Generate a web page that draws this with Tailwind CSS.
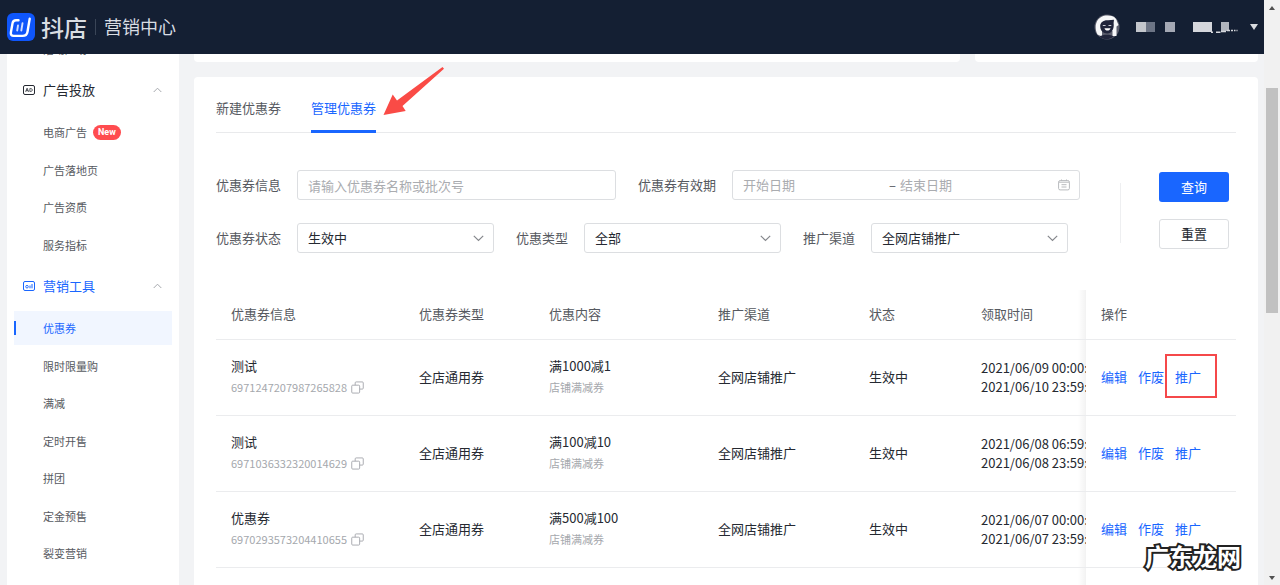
<!DOCTYPE html>
<html lang="zh-CN">
<head>
<meta charset="utf-8">
<title>抖店 营销中心</title>
<script src="https://cdn.jsdelivr.net/npm/@tailwindcss/browser@4"></script>
</head>
<body class="relative flex h-screen overflow-hidden bg-[#f2f3f5] font-['Noto_Sans_CJK_SC',sans-serif] text-[13px] leading-5 text-[#252931]">

<div class="flex min-w-0 flex-1 flex-col">
  <header class="flex h-[54px] shrink-0 items-center bg-[#141f33] pl-[7px] pr-[6px] text-[#d9dde3]">
    <svg class="h-7 w-7" viewBox="0 0 28 28" fill="none" stroke="#fff" stroke-linecap="round" stroke-linejoin="round" aria-hidden="true">
      <rect width="28" height="28" rx="6" fill="#0f56fb" stroke="none"/>
      <path d="M11.500 7.200H9C7 7.200 6 8 5.600 9.900L3.900 19.300C3.500 21.600 4.500 22.900 6.700 22.900H15.500C18.500 22.900 20 21.600 20.500 18.700L22.700 5.800" stroke-width="2.400"/>
      <path d="M11 12.500L10.200 17.500M15.500 10.300L14.300 17.500" stroke-width="1.900" stroke="#cfdcff"/>
    </svg>
    <span class="ml-[6px] text-[23px] font-medium leading-8">抖店</span>
    <span class="ml-[8px] h-4 w-px bg-[#3a4557]"></span>
    <span class="ml-[8px] pb-[2px] text-[18px] leading-8">营销中心</span>
    <div class="ml-auto flex items-center">
      <svg class="h-[26px] w-[26px]" viewBox="0 0 26 26" aria-hidden="true">
        <circle cx="13" cy="13" r="12.500" fill="#5d5f6e"/>
        <path d="M3.500 20.500C-.5 13 2 3 11.500 1.600C19 .8 22.500 4 23 7.500L24.500 11L22.500 12.500V22H18.500V17H8V22.500Z" fill="#f6f7f8"/>
        <path d="M6.200 12.500C6 8.500 9.500 6 14 6.300L20 5.800L19.600 9C20.500 15 17.500 19.500 13.300 19.500C9 19.500 6.400 16.500 6.200 12.500Z" fill="#20243a"/>
        <path d="M5.500 22.500C9 20 17 20 19.500 22.500C15.500 26 9.500 26 5.500 22.500Z" fill="#20243a"/>
        <path d="M8.800 11.500h2.800M14.500 11.500h2.800" stroke="#c9cbd3"/>
        <path d="M10.500 14.200h6C15.800 17.300 11 17.300 10.500 14.200Z" fill="#fff"/>
      </svg>
      <span class="ml-4 h-[10px] w-[10px] bg-[#c3c6cc]"></span>
      <span class="h-[10px] w-[9px] bg-[#6c7485]"></span>
      <span class="ml-[10px] h-[10px] w-[10px] bg-[#a4a8b4]"></span>
      <svg class="ml-[18px] h-[12px] w-[46px]" viewBox="0 0 46 12" aria-hidden="true">
        <path d="M0 1h19v10H0z" fill="#d5d7dc"/><path d="M28 1h8v9h-8z" fill="#b0b5be"/>
        <path d="M18 11.300h2M23 11.300h4.500M28 10.500h5M34 9.500h3M38 9.500h2M41 9.500h1.500M43.500 9.500h1" stroke="#d5d7dc" stroke-width="1.500"/>
      </svg>
      <svg class="ml-[11px] h-[6px] w-[8px]" viewBox="0 0 8 6" aria-hidden="true"><path d="M0 0h8L4 6z" fill="#d9dbdf"/></svg>
    </div>
  </header>

  <div class="flex min-h-0 flex-1 gap-[15px] overflow-hidden pl-[7px] pr-[6px]">
    <aside class="w-[172px] shrink-0 overflow-hidden bg-white px-[7px]">
      <nav class="-mt-[22px] text-[11px] text-[#565960]">
        <a href="#" class="flex h-[34px] items-center pl-[29px]">活动广场</a>
        <button type="button" class="mt-[7px] flex h-[34px] w-full items-center pl-[9px] pr-[10px] text-[13px] text-[#252931]">
          <svg class="h-3 w-3" viewBox="0 0 12 12" fill="none" stroke="currentColor" aria-hidden="true"><rect x=".5" y="1.500" width="11" height="9" rx="1.500"/><path d="M2.600 7.800L4.100 4.200L5.600 7.800M3.100 6.700h2M6.900 4.500v3h.7c2.200 0 2.200-3 0-3z" stroke-width=".8"/></svg>
          <span class="ml-2">广告投放</span>
          <svg class="ml-auto h-[6px] w-[9px]" viewBox="0 0 9 6" fill="none" stroke="#a5a8ad" aria-hidden="true"><path d="M.7 5L4.500 1.200L8.300 5"/></svg>
        </button>
        <ul class="mt-2 flex h-[147px] flex-col justify-between">
          <li><a href="#" class="flex h-[34px] items-center pl-[29px]">电商广告<span class="ml-[6px] flex h-[15px] items-center rounded-full bg-[#ff4c4f] px-[5px] font-[Roboto,sans-serif] text-[9px] font-bold text-white">New</span></a></li>
          <li><a href="#" class="flex h-[34px] items-center pl-[29px]">广告落地页</a></li>
          <li><a href="#" class="flex h-[34px] items-center pl-[29px]">广告资质</a></li>
          <li><a href="#" class="flex h-[34px] items-center pl-[29px]">服务指标</a></li>
        </ul>
        <button type="button" class="mt-[7px] flex h-[34px] w-full items-center pl-[9px] pr-[10px] text-[13px] text-[#1966ff]">
          <svg class="h-3 w-3" viewBox="0 0 12 12" fill="none" stroke="currentColor" aria-hidden="true"><rect x=".5" y="1.500" width="11" height="9" rx="1.500"/><circle cx="4" cy="6.700" r="1.300" stroke-width=".9"/><path d="M7 5.500v2.800M9 4v4.300"/></svg>
          <span class="ml-2">营销工具</span>
          <svg class="ml-auto h-[6px] w-[9px]" viewBox="0 0 9 6" fill="none" stroke="#a5a8ad" aria-hidden="true"><path d="M.7 5L4.500 1.200L8.300 5"/></svg>
        </button>
        <ul class="mt-2 flex h-[259px] flex-col justify-between">
          <li><a href="#" aria-current="page" class="flex h-[34px] items-center bg-[#f1f6ff] text-[#1966ff]"><span class="mr-[27px] h-[14px] w-[2px] bg-[#1966ff]"></span>优惠券</a></li>
          <li><a href="#" class="flex h-[34px] items-center pl-[29px]">限时限量购</a></li>
          <li><a href="#" class="flex h-[34px] items-center pl-[29px]">满减</a></li>
          <li><a href="#" class="flex h-[34px] items-center pl-[29px]">定时开售</a></li>
          <li><a href="#" class="flex h-[34px] items-center pl-[29px]">拼团</a></li>
          <li><a href="#" class="flex h-[34px] items-center pl-[29px]">定金预售</a></li>
          <li><a href="#" class="flex h-[34px] items-center pl-[29px]">裂变营销</a></li>
        </ul>
      </nav>
    </aside>

    <main class="flex min-w-0 flex-1 flex-col gap-[15px]">
      <div class="flex h-2 shrink-0 gap-[15px]">
        <div class="flex-1 rounded-b bg-white"></div>
        <div class="w-[283px] rounded-b bg-white"></div>
      </div>
      <section class="flex-1 rounded-t bg-white px-[22px]">
        <div role="tablist" class="flex h-14 gap-[30px] border-b border-[#e9eaec]">
          <button type="button" role="tab" class="-mb-px border-b-[3px] border-transparent pt-[9px] text-[#565960]">新建优惠券</button>
          <button type="button" role="tab" aria-selected="true" class="-mb-px border-b-[3px] border-[#1966ff] pt-[9px] text-[#1966ff]">管理优惠券</button>
        </div>

        <form class="mt-[37px] flex items-start">
          <div class="flex min-w-0 flex-1 flex-col gap-[23px] text-[#565960]">
            <div class="flex gap-[22px]">
              <div class="flex min-w-0 flex-[400] items-center gap-4">
                <label for="info" class="shrink-0">优惠券信息</label>
                <input id="info" type="text" placeholder="请输入优惠券名称或批次号" class="h-[30px] w-full min-w-0 rounded-[3px] border border-[#dcdee1] px-[10px] placeholder:text-[#aaacb0]">
              </div>
              <div class="flex min-w-0 flex-[442] items-center gap-4">
                <label for="start" class="shrink-0">优惠券有效期</label>
                <div class="flex h-[30px] min-w-0 flex-1 items-center rounded-[3px] border border-[#dcdee1] pl-[10px] pr-[9px]">
                  <input id="start" type="text" placeholder="开始日期" class="min-w-0 flex-1 placeholder:text-[#aaacb0]">
                  <span class="mr-1 w-[7px] text-center">–</span>
                  <input id="end" type="text" aria-label="结束日期" placeholder="结束日期" class="min-w-0 flex-1 placeholder:text-[#aaacb0]">
                  <svg class="ml-3 h-3 w-3" viewBox="0 0 12 12" fill="none" stroke="#b8babd" aria-hidden="true"><rect x=".6" y="1.600" width="10.800" height="9.300" rx="1.500"/><path d="M1 3.200h10M3.500 5.700h5M3.500 8h5M3.500 .5v1.500M8.500 .5v1.500"/></svg>
                </div>
              </div>
            </div>
            <div class="flex gap-[22px] pr-3">
              <div class="flex min-w-0 flex-[278] items-center gap-4">
                <label for="status" class="shrink-0">优惠券状态</label>
                <div class="relative min-w-0 flex-1">
                  <select id="status" class="h-[30px] w-full appearance-none rounded-[3px] border border-[#dcdee1] bg-white px-[10px] text-[#252931]"><option>生效中</option></select>
                  <svg class="pointer-events-none absolute right-[10px] top-3 h-[7px] w-[11px]" viewBox="0 0 11 7" fill="none" stroke="#85878c" stroke-width="1.200" aria-hidden="true"><path d="M.8 .9L5.500 5.500L10.200 .9"/></svg>
                </div>
              </div>
              <div class="flex min-w-0 flex-[265] items-center gap-4">
                <label for="type" class="shrink-0">优惠类型</label>
                <div class="relative min-w-0 flex-1">
                  <select id="type" class="h-[30px] w-full appearance-none rounded-[3px] border border-[#dcdee1] bg-white px-[10px] text-[#252931]"><option>全部</option></select>
                  <svg class="pointer-events-none absolute right-[10px] top-3 h-[7px] w-[11px]" viewBox="0 0 11 7" fill="none" stroke="#85878c" stroke-width="1.200" aria-hidden="true"><path d="M.8 .9L5.500 5.500L10.200 .9"/></svg>
                </div>
              </div>
              <div class="flex min-w-0 flex-[265] items-center gap-4">
                <label for="channel" class="shrink-0">推广渠道</label>
                <div class="relative min-w-0 flex-1">
                  <select id="channel" class="h-[30px] w-full appearance-none rounded-[3px] border border-[#dcdee1] bg-white px-[10px] text-[#252931]"><option>全网店铺推广</option></select>
                  <svg class="pointer-events-none absolute right-[10px] top-3 h-[7px] w-[11px]" viewBox="0 0 11 7" fill="none" stroke="#85878c" stroke-width="1.200" aria-hidden="true"><path d="M.8 .9L5.500 5.500L10.200 .9"/></svg>
                </div>
              </div>
            </div>
          </div>
          <div class="ml-10 mt-[13px] h-[60px] w-px bg-[#eeeff1]"></div>
          <div class="ml-[38px] mr-[7px] mt-[2px] flex w-[70px] flex-col gap-[17px]">
            <button type="submit" class="h-[30px] rounded-[3px] bg-[#1966ff] text-white">查询</button>
            <button type="reset" class="h-[30px] rounded-[3px] border border-[#dcdee1]">重置</button>
          </div>
        </form>

        <table class="mt-[37px] w-full table-fixed border-separate border-spacing-0 text-left [&_td]:border-b [&_td]:border-[#ebecee] [&_td]:pb-[2px] [&_td]:pl-[15px] [&_td]:whitespace-nowrap [&_th]:border-b [&_th]:border-[#ebecee] [&_th]:pb-[2px] [&_th]:pl-[15px] [&_th]:font-normal [&_th]:text-[#565960]">
          <colgroup><col class="w-[188px]"><col class="w-[130px]"><col class="w-[169px]"><col class="w-[151px]"><col class="w-[112px]"><col class="w-[120px]"><col class="w-[150px]"></colgroup>
          <thead>
            <tr class="h-[50px]"><th>优惠券信息</th><th>优惠券类型</th><th>优惠内容</th><th>推广渠道</th><th>状态</th><th>领取时间</th>
            <th class="relative before:absolute before:-left-2 before:inset-y-0 before:w-2 before:bg-linear-to-l before:from-black/5 before:to-transparent">操作</th></tr>
          </thead>
          <tbody>
            <tr class="h-[76px]">
              <td><div>测试</div><div class="flex items-center pt-px text-[11px] text-[#a5a8ad]">6971247207987265828<button type="button" aria-label="复制" class="ml-1"><svg class="h-[13px] w-[13px]" viewBox="0 0 14 14" fill="none" stroke="currentColor"><rect x=".8" y="4.500" width="8.500" height="8.500" rx="1"/><path d="M4.500 4.500V2a1 1 0 0 1 1-1h6.700a1 1 0 0 1 1 1v5.700a1 1 0 0 1-1 1H9.300"/></svg></button></div></td>
              <td>全店通用券</td>
              <td><div>满1000减1</div><div class="pt-px text-[11px] text-[#a5a8ad]">店铺满减券</div></td>
              <td>全网店铺推广</td><td>生效中</td>
              <td class="overflow-hidden leading-[19px]">2021/06/09 00:00:00<br>2021/06/10 23:59:59</td>
              <td class="relative before:absolute before:-left-2 before:inset-y-0 before:w-2 before:bg-linear-to-l before:from-black/5 before:to-transparent"><div class="flex gap-[11px] text-[#1966ff]"><a href="#">编辑</a><a href="#">作废</a><a href="#" class="relative">推广<span class="absolute -left-[10px] -top-[13px] h-11 w-[52px] border-2 border-[#f5484a]"></span></a></div></td>
            </tr>
            <tr class="h-[76px]">
              <td><div>测试</div><div class="flex items-center pt-px text-[11px] text-[#a5a8ad]">6971036332320014629<button type="button" aria-label="复制" class="ml-1"><svg class="h-[13px] w-[13px]" viewBox="0 0 14 14" fill="none" stroke="currentColor"><rect x=".8" y="4.500" width="8.500" height="8.500" rx="1"/><path d="M4.500 4.500V2a1 1 0 0 1 1-1h6.700a1 1 0 0 1 1 1v5.700a1 1 0 0 1-1 1H9.300"/></svg></button></div></td>
              <td>全店通用券</td>
              <td><div>满100减10</div><div class="pt-px text-[11px] text-[#a5a8ad]">店铺满减券</div></td>
              <td>全网店铺推广</td><td>生效中</td>
              <td class="overflow-hidden leading-[19px]">2021/06/08 06:59:00<br>2021/06/08 23:59:59</td>
              <td class="relative before:absolute before:-left-2 before:inset-y-0 before:w-2 before:bg-linear-to-l before:from-black/5 before:to-transparent"><div class="flex gap-[11px] text-[#1966ff]"><a href="#">编辑</a><a href="#">作废</a><a href="#">推广</a></div></td>
            </tr>
            <tr class="h-[76px]">
              <td><div>优惠券</div><div class="flex items-center pt-px text-[11px] text-[#a5a8ad]">6970293573204410655<button type="button" aria-label="复制" class="ml-1"><svg class="h-[13px] w-[13px]" viewBox="0 0 14 14" fill="none" stroke="currentColor"><rect x=".8" y="4.500" width="8.500" height="8.500" rx="1"/><path d="M4.500 4.500V2a1 1 0 0 1 1-1h6.700a1 1 0 0 1 1 1v5.700a1 1 0 0 1-1 1H9.300"/></svg></button></div></td>
              <td>全店通用券</td>
              <td><div>满500减100</div><div class="pt-px text-[11px] text-[#a5a8ad]">店铺满减券</div></td>
              <td>全网店铺推广</td><td>生效中</td>
              <td class="overflow-hidden leading-[19px]">2021/06/07 00:00:00<br>2021/06/07 23:59:59</td>
              <td class="relative before:absolute before:-left-2 before:inset-y-0 before:w-2 before:bg-linear-to-l before:from-black/5 before:to-transparent"><div class="flex gap-[11px] text-[#1966ff]"><a href="#">编辑</a><a href="#">作废</a><a href="#">推广</a></div></td>
            </tr>
            <tr class="h-[76px]"><td></td><td></td><td></td><td></td><td></td><td></td>
              <td class="relative before:absolute before:-left-2 before:inset-y-0 before:w-2 before:bg-linear-to-l before:from-black/5 before:to-transparent"></td></tr>
          </tbody>
        </table>
      </section>
    </main>
  </div>
</div>

<div class="flex w-4 shrink-0 flex-col items-center bg-[#f1f1f1] pb-[5px] pt-[6px]" aria-hidden="true">
  <svg class="h-1 w-[6px]" viewBox="0 0 6 4"><path d="M0 4L3 0L6 4z" fill="#505050"/></svg>
  <div class="mt-[78px] h-[225px] w-3 bg-[#c1c1c1]"></div>
  <svg class="mt-auto h-1 w-[6px]" viewBox="0 0 6 4"><path d="M0 0L3 4L6 0z" fill="#505050"/></svg>
</div>

<svg class="pointer-events-none absolute left-[383px] top-[66px] h-[50px] w-[62px]" viewBox="0 0 62 50" aria-hidden="true"><path d="M.5 49L9.700 28.500L14 34.500L59.500 1L61 2.700L19.500 40L22.700 45Z" fill="#fa4b46"/></svg>
<div class="pointer-events-none absolute bottom-[13px] right-[39px] text-[24px] font-bold leading-8 text-white [-webkit-text-stroke:4px_#222] [paint-order:stroke_fill]">广东龙网</div>
</body>
</html>
